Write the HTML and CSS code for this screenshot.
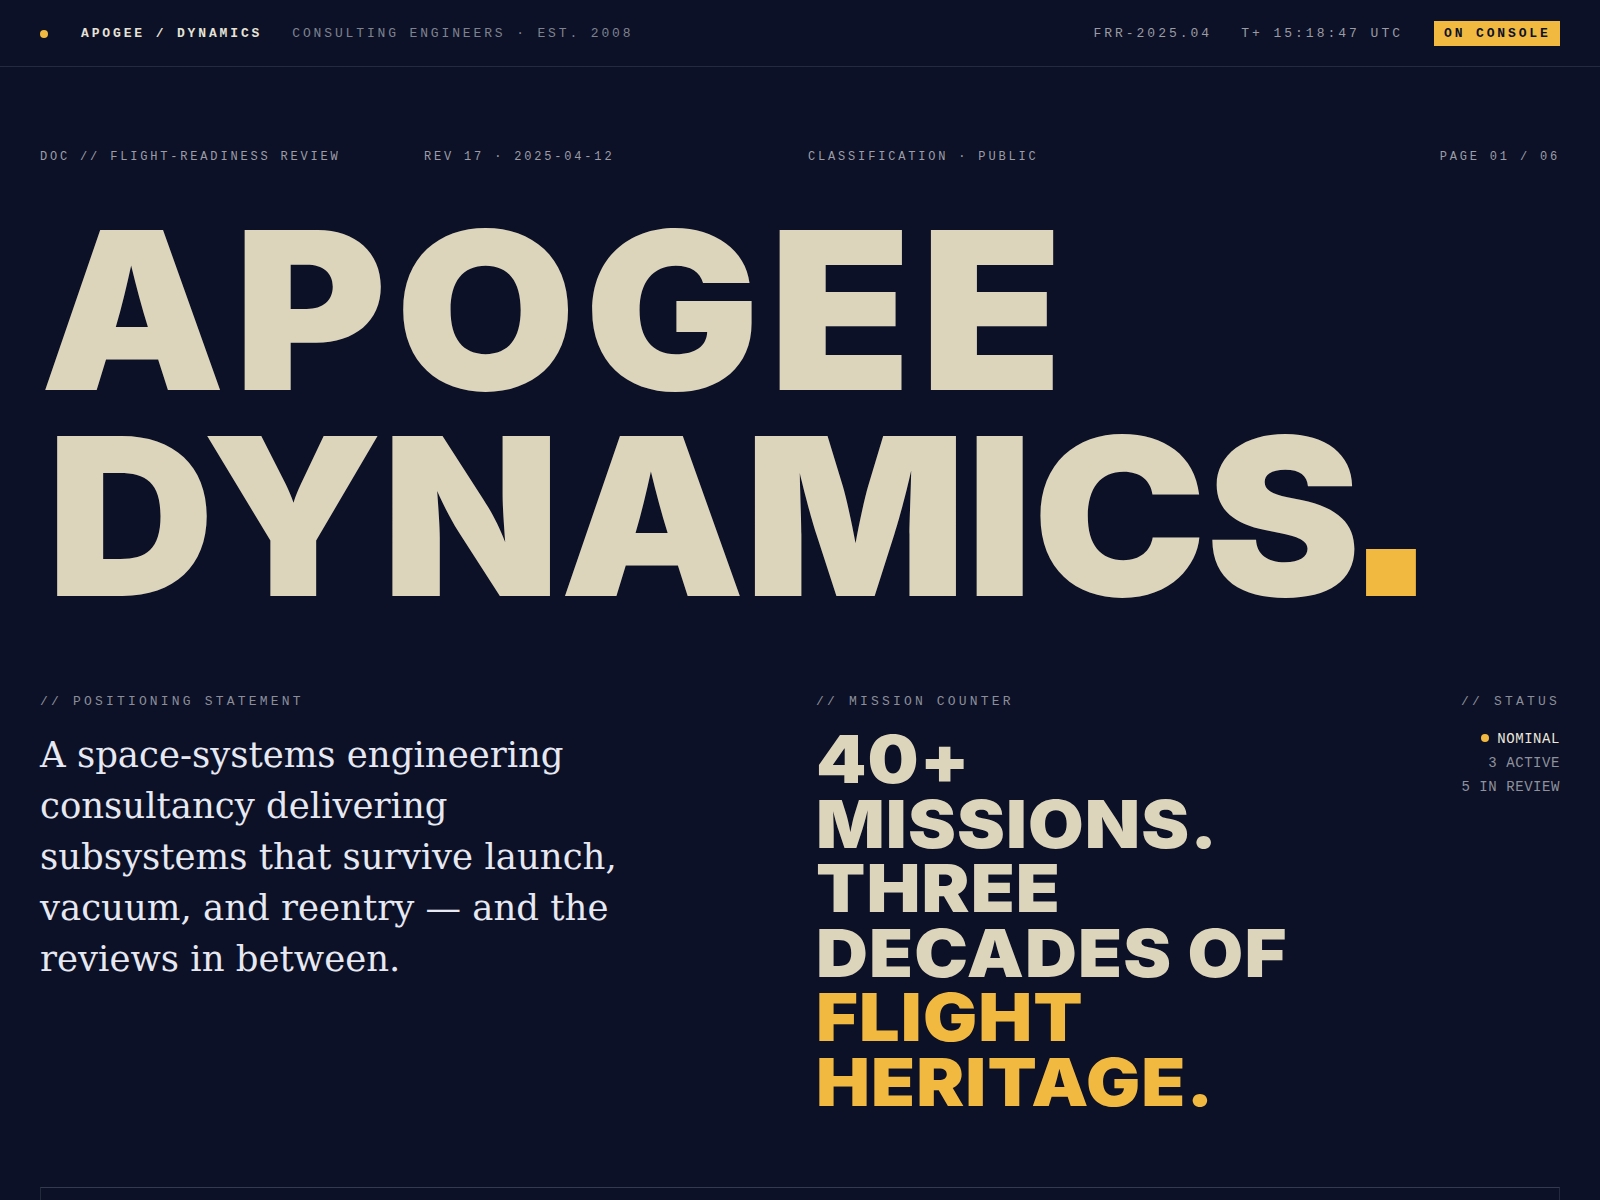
FILE: index.html
```html
<!DOCTYPE html>
<html lang="en">
<head>
<meta charset="utf-8">
<title>Apogee Dynamics</title>
<link rel="stylesheet" href="styles.css">
</head>
<body>
<header class="topbar">
  <div class="brand">
    <span class="dot"></span>
    <span class="brand-name">APOGEE / DYNAMICS</span>
    <span class="tagline">CONSULTING ENGINEERS · EST. 2008</span>
  </div>
  <div class="meta">
    <span class="meta-item">FRR-2025.04</span>
    <span class="meta-item">T+ 15:18:47 UTC</span>
    <span class="badge">ON CONSOLE</span>
  </div>
</header>
<main class="page">
  <div class="docrow">
    <span>DOC // FLIGHT-READINESS REVIEW</span>
    <span>REV 17 · 2025-04-12</span>
    <span>CLASSIFICATION · PUBLIC</span>
    <span class="docrow-end">PAGE 01 / 06</span>
  </div>
  <h1 class="title">
    <span class="title-line line-1">APOGEE</span>
    <span class="title-line line-2">DYNAMICS<span class="period"></span></span>
  </h1>
  <section class="lower">
    <div class="statement">
      <div class="label">// POSITIONING STATEMENT</div>
      <p class="statement-text">A space-systems engineering consultancy delivering subsystems that survive launch, vacuum, and reentry — and the reviews in between.</p>
    </div>
    <div class="right">
      <div class="counter">
        <div class="label">// MISSION COUNTER</div>
        <h2 class="counter-text">40+<br>MISSIONS.<br>THREE<br>DECADES OF<br><span class="accent">FLIGHT<br>HERITAGE.</span></h2>
      </div>
      <div class="status">
        <div class="label">// STATUS</div>
        <ul class="status-list">
          <li class="status-nominal"><span class="dot small"></span>NOMINAL</li>
          <li>3 ACTIVE</li>
          <li>5 IN REVIEW</li>
        </ul>
      </div>
    </div>
  </section>
  <div class="panel"></div>
</main>
</body>
</html>
```

FILE: styles.css
```css
* { box-sizing: border-box; }
html, body {
  margin: 0;
  padding: 0;
  background: #0c1127;
  color: #e8e4d8;
  font-family: "Liberation Mono", "DejaVu Sans Mono", monospace;
  overflow: hidden;
}
body { height: 1200px; }

.topbar {
  height: 67px;
  border-bottom: 1px solid #242a3f;
  display: flex;
  align-items: center;
  justify-content: space-between;
  padding: 0 40px;
}
.brand {
  display: flex;
  align-items: center;
}
.dot {
  width: 8px;
  height: 8px;
  border-radius: 50%;
  background: #f2b940;
  display: inline-block;
}
.brand .dot { margin-right: 33px; margin-top: 2px; }
.brand-name {
  font-size: 13px;
  letter-spacing: 0.22em;
  font-weight: 700;
  color: #e6e2d6;
  margin-right: 30px;
}
.tagline {
  font-size: 13px;
  letter-spacing: 0.22em;
  color: #7e828f;
}
.meta {
  display: flex;
  align-items: center;
  gap: 29px;
}
.meta-item {
  font-size: 13px;
  letter-spacing: 0.23em;
  color: #9a9ba3;
}
.badge {
  background: #f2b940;
  color: #0c1127;
  font-size: 13px;
  font-weight: 700;
  letter-spacing: 0.22em;
  padding: 0 0 0 10px;
  width: 126px;
  height: 25px;
  line-height: 25px;
  margin-left: 2px;
}

.page {
  padding: 80px 40px 0;
}
.docrow {
  display: grid;
  grid-template-columns: repeat(4, 1fr);
  gap: 16px;
  font-size: 12px;
  letter-spacing: 0.235em;
  color: #9c9da6;
  line-height: 18px;
  padding-top: 1px;
}
.docrow-end { text-align: right; }

.title {
  margin: 41px 0 0;
  font-family: "Inter", "Liberation Sans", sans-serif;
  font-weight: 900;
  font-size: 220px;
  line-height: 206px;
  color: #dcd5bb;
}
.title-line {
  display: block;
  width: max-content;
  white-space: nowrap;
  transform: scaleX(1.06);
  transform-origin: left center;
}
.line-1 { letter-spacing: 7.9px; }
.line-2 { letter-spacing: -1.1px; padding-left: 6px; }
.period {
  display: inline-block;
  width: 47px;
  height: 47px;
  background: #f2b940;
  margin-left: 6px;
}

.lower {
  margin-top: 74px;
  display: grid;
  grid-template-columns: 1fr 1fr;
  gap: 32px;
}
.label {
  font-size: 13px;
  letter-spacing: 0.245em;
  color: #8b8e99;
  line-height: 18px;
}
.statement-text {
  margin: 18px 0 0;
  max-width: 605px;
  font-family: "DejaVu Serif", "Liberation Serif", serif;
  font-size: 35.5px;
  line-height: 51px;
  color: #e6e8f2;
}
.right {
  display: flex;
  justify-content: space-between;
}
.counter-text {
  margin: 16px 0 0;
  font-family: "Inter", "Liberation Sans", sans-serif;
  font-weight: 900;
  font-size: 66px;
  line-height: 64.6px;
  letter-spacing: 1px;
  color: #dcd5bb;
  transform: scaleX(1.09);
  transform-origin: left top;
}
.accent { color: #f2b940; }
.status { text-align: right; }
.status-list {
  list-style: none;
  margin: 16px 0 0;
  padding: 0;
  font-size: 14px;
  letter-spacing: 0.04em;
  line-height: 24px;
  color: #8f929c;
}
.status-nominal { color: #ece8dc; }
.dot.small { margin-right: 8px; vertical-align: 1px; }

.panel {
  margin-top: 72px;
  height: 120px;
  border: 1px solid #232a3e;
  border-top-color: #343a50;
}
```
